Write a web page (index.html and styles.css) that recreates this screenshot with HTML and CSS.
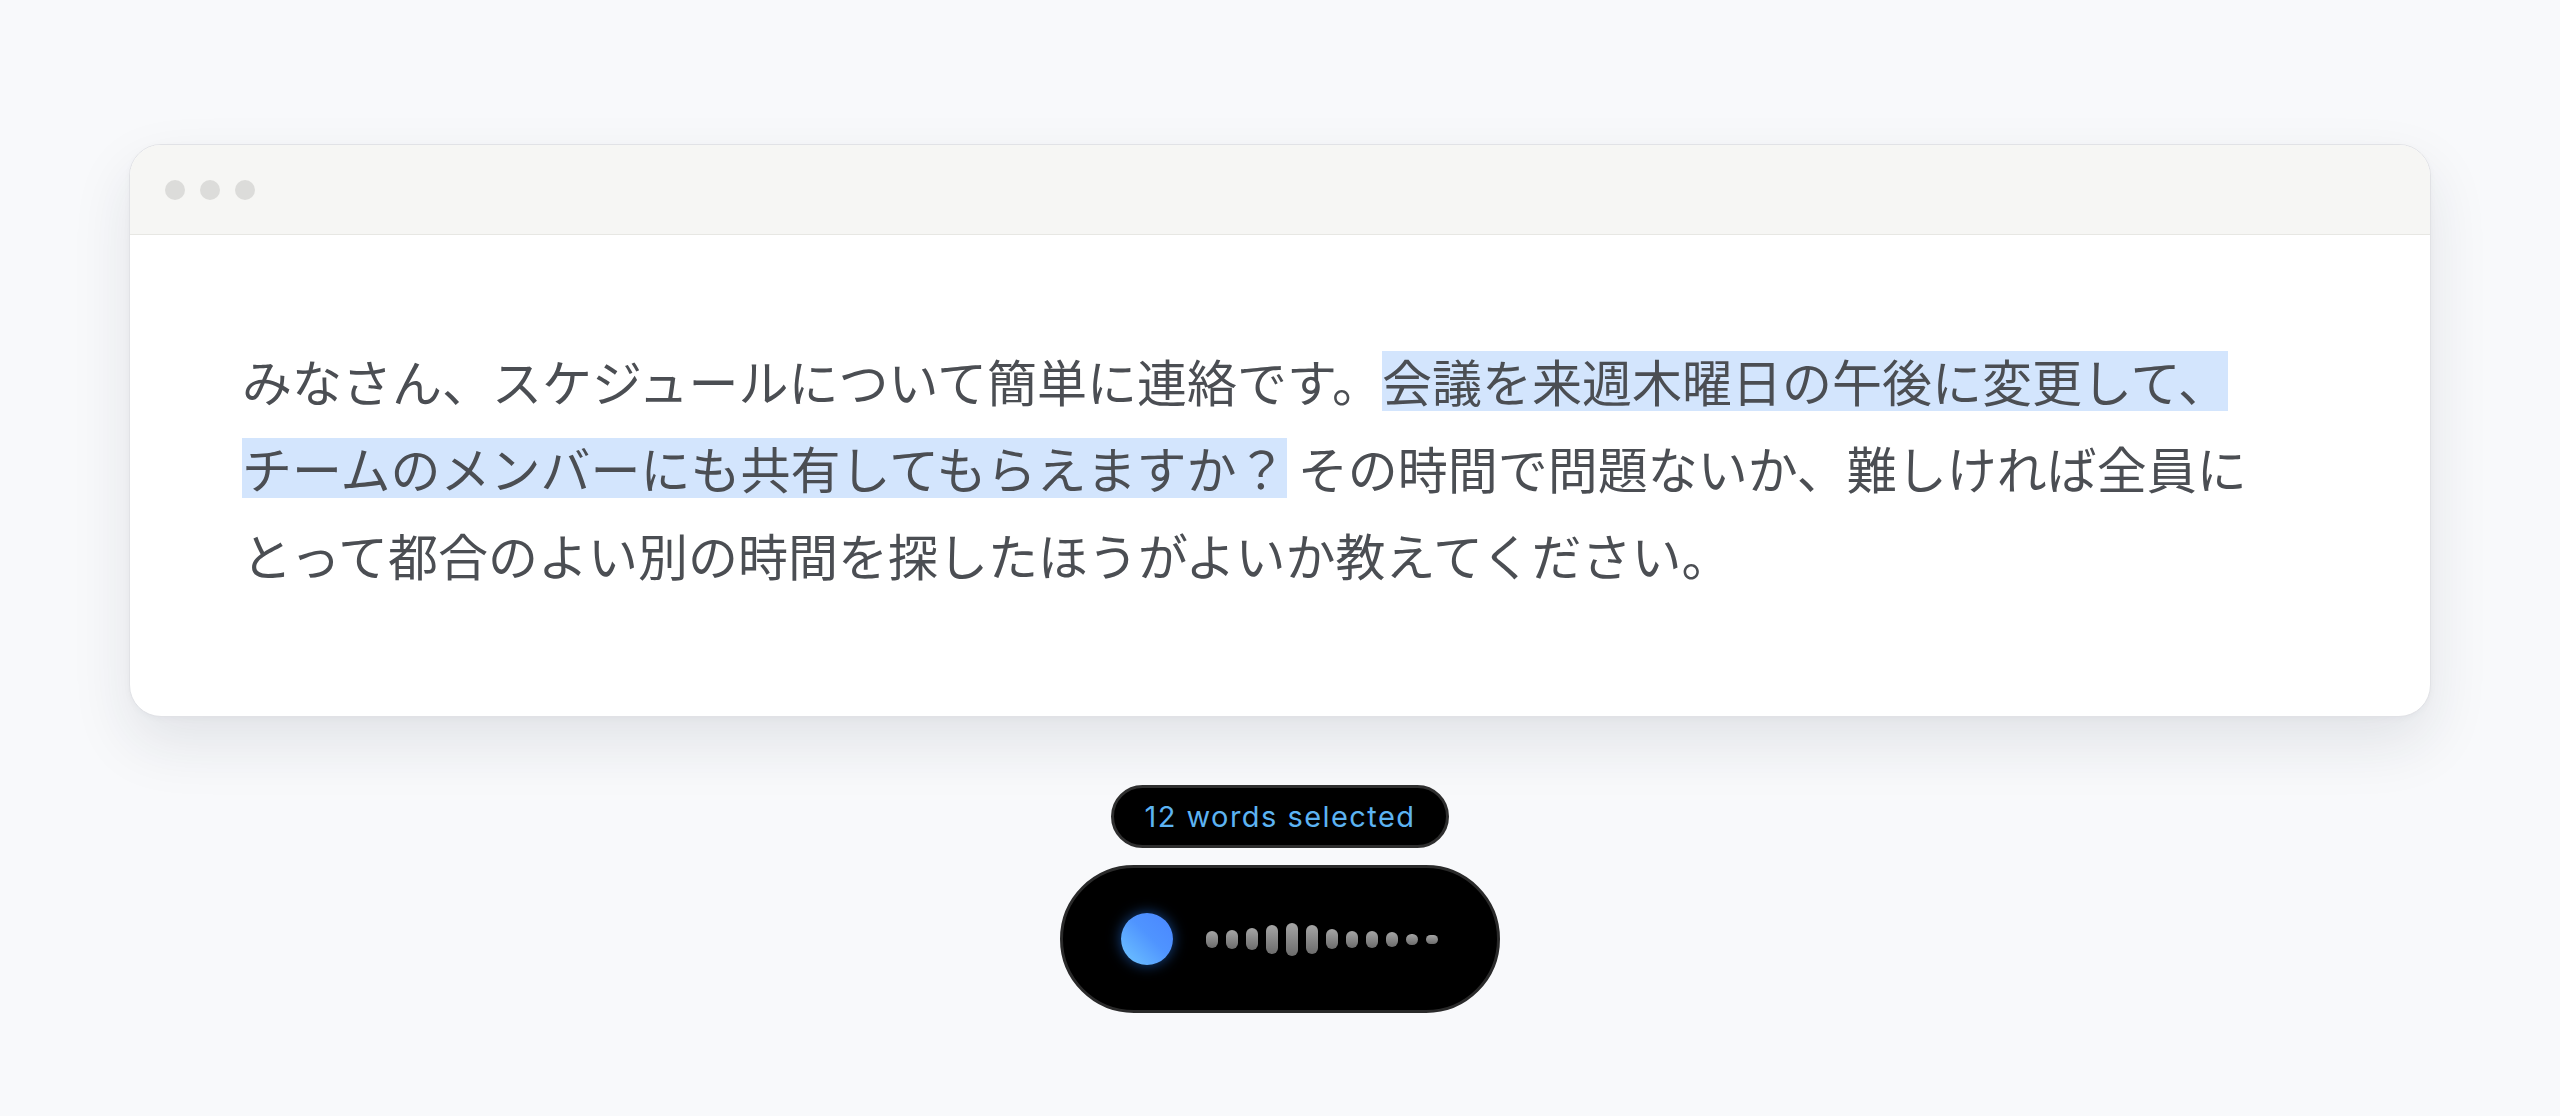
FILE: index.html
```html
<!DOCTYPE html>
<html lang="ja">
<head>
  <meta charset="UTF-8" />
  <meta name="viewport" content="width=device-width, initial-scale=1.0"/>
  <title>Dictation</title>
  <link rel="stylesheet" href="styles.css">
</head>
<body>
  <div class="page">
    <div class="window">
      <div class="titlebar">
        <span class="dot"></span>
        <span class="dot"></span>
        <span class="dot"></span>
      </div>
      <div class="doc">
        <p class="text">みなさん、スケジュールについて簡単に連絡です。<span class="sel">会議を来週木曜日の午後に変更して、チームのメンバーにも共有してもらえますか？</span> その時間で問題ないか、難しければ全員にとって都合のよい別の時間を探したほうがよいか教えてください。</p>
      </div>
    </div>

    <div class="dictation">
      <div class="count">12 words selected</div>
      <div class="recorder">
        <span class="orb"></span>
        <div class="wave">
          <span style="height:17px"></span>
          <span style="height:19px"></span>
          <span style="height:22px"></span>
          <span style="height:29px"></span>
          <span style="height:33px"></span>
          <span style="height:29px"></span>
          <span style="height:20px"></span>
          <span style="height:17px"></span>
          <span style="height:17px"></span>
          <span style="height:15px"></span>
          <span style="height:11px"></span>
          <span style="height:9px"></span>
        </div>
      </div>
    </div>
  </div>
</body>
</html>
```

FILE: styles.css
```css
* {
  box-sizing: border-box;
}

body {
  margin: 0;
  background: #f8f9fb;
  font-family: "Noto Sans CJK JP", sans-serif;
}

.page {
  display: flex;
  flex-direction: column;
  align-items: center;
  padding-top: 144px;
}

.window {
  width: 2302px;
  background: #fff;
  border: 1px solid #e1e2e6;
  border-radius: 32px;
  overflow: hidden;
  box-shadow: 0 26px 60px rgba(30, 35, 60, 0.1), 0 2px 6px rgba(30, 35, 60, 0.03);
}

.titlebar {
  height: 90px;
  display: flex;
  align-items: center;
  gap: 15px;
  padding-left: 35px;
  background: #f6f6f4;
  border-bottom: 1px solid #e7e7e3;
}

.dot {
  width: 20px;
  height: 20px;
  border-radius: 50%;
  background: #dcdcda;
}

.doc {
  padding: 102px 0 118px 112px;
}

.text {
  margin: 0;
  max-width: 2020px;
  font-size: 50px;
  line-height: 87px;
  color: #4b4e53;
}

.sel {
  background: linear-gradient(transparent 10%, #d3e5fd 10%, #d3e5fd 93%, transparent 93%);
}

.dictation {
  display: flex;
  flex-direction: column;
  align-items: center;
  gap: 17px;
  margin-top: 68px;
}

.count {
  height: 63px;
  display: flex;
  align-items: center;
  padding: 0 30px;
  background: #000;
  border: 3px solid #2e2e2e;
  border-radius: 32px;
  color: #5cb3f2;
  font-family: Inter, "Liberation Sans", sans-serif;
  font-size: 29px;
  letter-spacing: 0.05em;
}

.recorder {
  width: 440px;
  height: 148px;
  display: flex;
  align-items: center;
  gap: 33px;
  padding-left: 58px;
  background: #000;
  border: 3px solid #2a2a2a;
  border-radius: 74px;
}

.orb {
  width: 52px;
  height: 52px;
  border-radius: 50%;
  background: linear-gradient(45deg, #70c6ff 0%, #4f94ff 55%, #4a86ff 100%);
  box-shadow: 0 0 14px rgba(40, 130, 255, 0.55);
}

.wave {
  display: flex;
  align-items: center;
  gap: 8px;
}

.wave span {
  width: 12px;
  border-radius: 6px;
  background: linear-gradient(#a5a5a5, #6c6c6c);
}
```
